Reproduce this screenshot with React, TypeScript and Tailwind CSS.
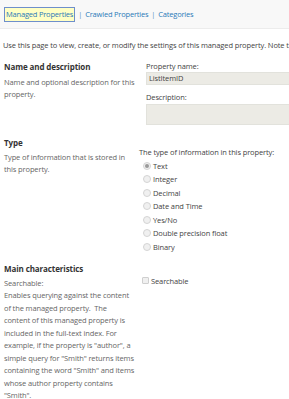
const font = { fontFamily: '"Open Sans", "Noto Sans", sans-serif' };

const types = ['Text', 'Integer', 'Decimal', 'Date and Time', 'Yes/No', 'Double precision float', 'Binary'];

const searchableLines = [
  'Enables querying against the content',
  'of the managed property.  The',
  'content of this managed property is',
  'included in the full-text index. For',
  'example, if the property is "author", a',
  'simple query for "Smith" returns items',
  'containing the word "Smith" and items',
  'whose author property contains',
  '"Smith".',
];

function Radio({ checked }: { checked?: boolean }) {
  return (
    <span className="w-[8px] h-[8px] rounded-full border border-[#d4d4d4] bg-[#f0f0f0] flex items-center justify-center shrink-0">
      {checked && <span className="w-[4px] h-[4px] rounded-full bg-[#9a9a9a]" />}
    </span>
  );
}

export default function App() {
  return (
    <div className="w-[289px] h-[399px] overflow-hidden bg-white text-[#444] text-[7.5px] tracking-[-0.12px] leading-[12.5px]" style={font}>
      <div className="h-[29px] bg-[#f8f8f8] border-b border-[#ececec] flex items-center pl-[4px] pt-[1px] text-[#2a7ab8] whitespace-nowrap">
        <span className="border border-[#6e8fcb] bg-[#ffffc4] px-[1px] h-[15px] flex items-center tracking-[-0.2px]">Managed Properties</span>
        <span className="mx-[3px] text-[#5a8ec0]">|</span>
        <span className="tracking-[-0.2px]">Crawled Properties</span>
        <span className="mx-[3px] text-[#5a8ec0]">|</span>
        <span className="tracking-[-0.2px]">Categories</span>
      </div>

      <p className="mt-[10px] pl-[3px] whitespace-nowrap">Use this page to view, create, or modify the settings of this managed property. Note that</p>

      <div className="mt-[8px] flex">
        <div className="w-[142px] shrink-0 pl-[4px] pr-[4px]">
          <h2 className="text-[8px] tracking-[-0.1px] font-bold text-[#333] leading-[14px]">Name and description</h2>
          <p className="mt-[2px] text-[#666] whitespace-pre">
            {'Name and optional description for this\nproperty.'}
          </p>
        </div>
        <div className="flex-1 min-w-0 pl-[4px]">
          <div>Property name:</div>
          <div className="h-[13px] bg-[#ecebe5] border border-[#e2e2dc] border-r-0 pl-[2px] flex items-center text-[#444]">ListItemID</div>
          <div className="mt-[6px]">Description:</div>
          <div className="h-[21px] bg-[#ecebe5] border border-[#e2e2dc] border-r-0" />
        </div>
      </div>

      <div className="mt-[11px] flex">
        <div className="w-[135px] shrink-0 pl-[4px] pr-[4px]">
          <h2 className="text-[8px] tracking-[-0.1px] font-bold text-[#333] leading-[14px]">Type</h2>
          <p className="mt-[1px] text-[#666] whitespace-pre">
            {'Type of information that is stored in\nthis property.'}
          </p>
        </div>
        <div className="flex-1 min-w-0 pt-[10px] pl-[4px]">
          <div className="whitespace-nowrap">The type of information in this property:</div>
          <div className="mt-[1px] flex flex-col">
            {types.map((t, i) => (
              <label key={t} className="h-[13.5px] flex items-center gap-[2px] pl-[4px] whitespace-nowrap">
                <Radio checked={i === 0} />
                <span>{t}</span>
              </label>
            ))}
          </div>
        </div>
      </div>

      <div className="mt-[8px] flex">
        <div className="w-[138px] shrink-0 pl-[4px] pr-[2px]">
          <h2 className="text-[8px] tracking-[-0.1px] font-bold text-[#333] leading-[14px]">Main characteristics</h2>
          <p className="mt-[1px] text-[#666]">Searchable:</p>
          <div className="text-[#666]">
            {searchableLines.map((l) => (
              <div key={l} className="whitespace-pre">{l}</div>
            ))}
          </div>
        </div>
        <div className="flex-1 min-w-0 pl-[4px] pt-[13px]">
          <label className="flex items-center gap-[2px] whitespace-nowrap">
            <span className="w-[7px] h-[7px] border border-[#cfcfcf] bg-[#f0f0f0] rounded-[1px]" />
            <span>Searchable</span>
          </label>
        </div>
      </div>
    </div>
  );
}
